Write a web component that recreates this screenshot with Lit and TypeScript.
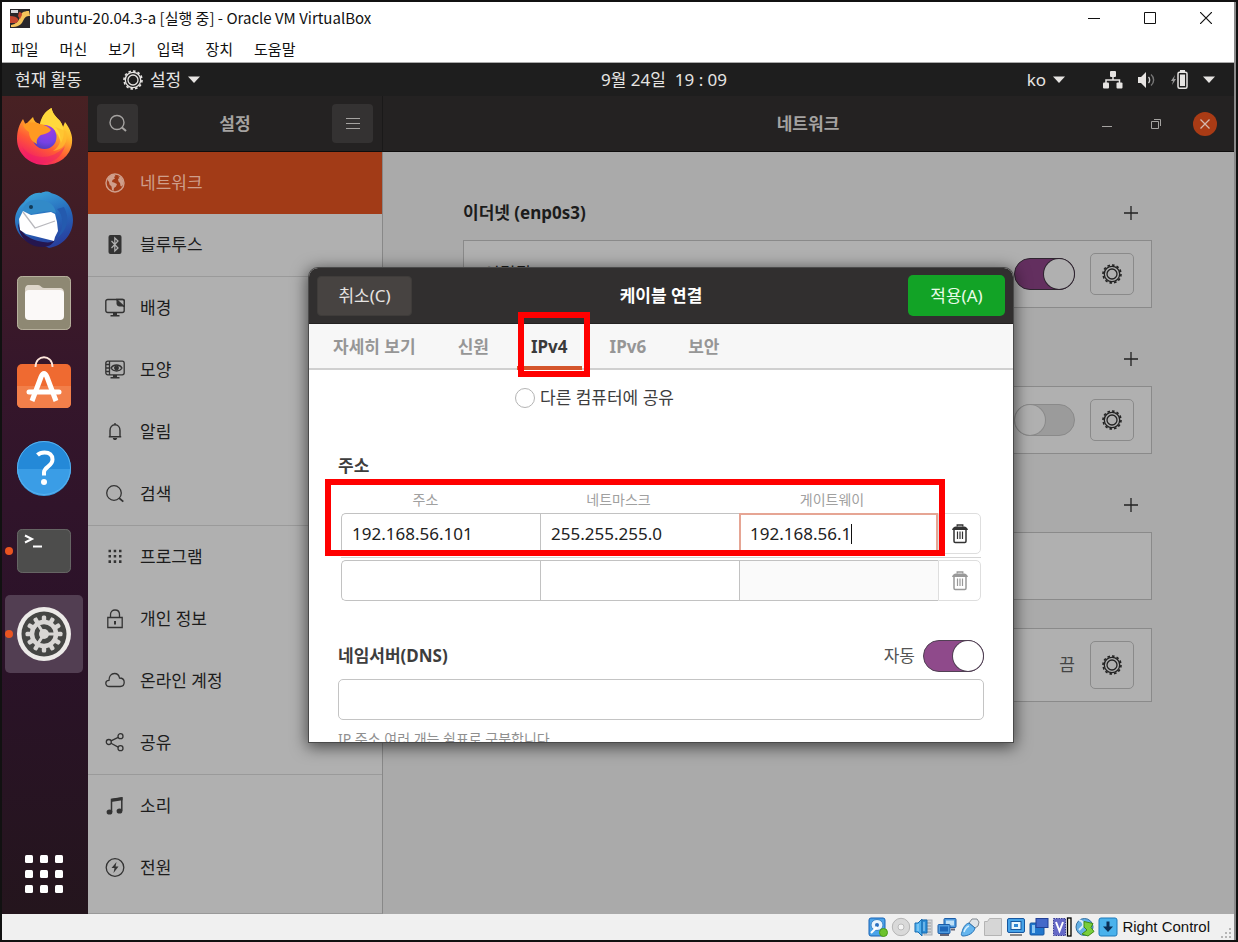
import { LitElement, html, css, svg, nothing } from "lit";
import { customElement } from "lit/decorators.js";
import { classMap } from "lit/directives/class-map.js";

const gear = html`<svg width="20" height="20" viewBox="0 0 20 20" fill="none" stroke="currentColor" aria-hidden="true">
  <circle cx="10" cy="10" r="9" stroke-width="1.6" pathLength="24" stroke-dasharray="1.1 .9" />
  <circle cx="10" cy="10" r="7.7" stroke-width="1.3" />
  <circle cx="10" cy="10" r="5" stroke-width="1.3" />
</svg>`;

const search = html`<svg width="20" height="20" viewBox="0 0 20 20" fill="none" stroke="currentColor" stroke-width="1.4" aria-hidden="true">
  <circle cx="9" cy="8.500" r="7" /><path d="M14 13.500l4 3.600" stroke-width="2" />
</svg>`;

const caret = html`<svg width="12" height="7" viewBox="0 0 12 7" fill="currentColor" aria-hidden="true"><path d="M0 .5h12L6 7z" /></svg>`;

const plus = html`<svg width="14" height="14" viewBox="0 0 14 14" stroke="currentColor" stroke-width="1.3" aria-hidden="true"><path d="M7 0v14M0 7h14" /></svg>`;

const trash = html`<svg width="16" height="20" viewBox="0 0 16 20" fill="none" stroke="currentColor" aria-hidden="true">
  <path d="M0 6C.6 3.800 2 2.800 4 2.600h8c2 .2 3.400 1.200 4 3.400z" fill="currentColor" stroke="none" />
  <path d="M5.200 2.600V1h5.600v1.600" stroke-width="1.300" />
  <path d="M2 6v11.300c0 .8.4 1.200 1.200 1.200h9.600c.8 0 1.200-.4 1.200-1.200V6" stroke-width="1.500" />
  <path d="M5.500 7.500v7.500M8 7.500v7.500M10.500 7.500v7.500" stroke-width="1.200" />
</svg>`;

/* 20px line icons of the settings list */
const panelIcons: Record<string, unknown> = {
  network: svg`<circle cx="10" cy="10" r="9" fill="none" stroke="currentColor" stroke-width="1.4"/>
    <path d="M3 5c2-2.500 4-3.500 6.500-3.500l1 1.500-1.500 1 1 1.500-2.500 1.500-.5 2 2 .5 3 1.500-1 2.500-2 1.500-.5 3-1.500-1-.5-3.500-2-2-.5-2.500L2.500 7zM13 3.500l3 .5 2 3 .5 3.500-1.500 3-1.500-.5-.5-3-1.500-1.500-.5-2.500 1.500-1z" fill="currentColor"/>`,
  bluetooth: svg`<rect x="3.500" y="0" width="13" height="19" rx="2" fill="currentColor"/>
    <path d="M6.500 6l6.500 7-3.200 3V3L13 6l-6.500 7" fill="none" stroke="#b0b0b0" stroke-width="1.200"/>`,
  background: svg`<g fill="none" stroke="currentColor" stroke-width="1.400"><rect x=".8" y="1.500" width="18.400" height="13" rx="2"/></g>
    <path d="M11.500 2v3.500c0 2 1.500 3 3 3H19z" fill="currentColor"/><path d="M13 2.500h5c.7 0 1 .3 1 1V8z" fill="#b0b0b0"/><path d="M12 2l7 6.500" stroke="currentColor" stroke-width="1.200"/><path d="M8 14.500h4v2.500h2.500v1.600h-9V17H8z" fill="currentColor"/><path d="M11 1.500h7.200c.7 0 1 .3 1 1V9" fill="none" stroke="currentColor" stroke-width="1.400"/>`,
  look: svg`<g fill="none" stroke="currentColor" stroke-width="1.300"><rect x=".8" y="1.200" width="18.400" height="13.600" rx="2"/><path d="M4.500 1v14M1 4.500h3.500M1 8h3.500M1 11.500h3.500M6 8c2.500-4 8.500-4 11 0-2.500 4-8.500 4-11 0z"/><circle cx="11.500" cy="8" r="1.800" fill="currentColor"/></g><path d="M8 15h4v2h2.500v1.600h-9V17H8z" fill="currentColor"/>`,
  bell: svg`<path d="M5 14.500V8.500C5 5.200 7 2.800 10 2.800s5 2.400 5 5.700v6M3.800 14.700h12.400M10 1v2" fill="none" stroke="currentColor" stroke-width="1.400"/><path d="M7.800 16h4.400c-.3 1.500-1 2-2.200 2s-2-.5-2.200-2z" fill="currentColor"/>`,
  search: svg`<circle cx="9" cy="9" r="7.300" fill="none" stroke="currentColor" stroke-width="1.300"/><path d="M14 14l4.300 3.700" stroke="currentColor" stroke-width="1.700"/>`,
  apps: svg`<path d="M3.500 4h2.500M8.700 4h2.500M14 4h2.500M3.500 9.300h2.500M8.700 9.300h2.500M14 9.300h2.500M3.500 14.600h2.500M8.700 14.600h2.500M14 14.600h2.500" stroke="currentColor" stroke-width="2.600" />`,
  lock: svg`<path d="M2.800 8.500h14.400v10H2.800zM5.500 8V5.500C5.500 2.500 7.500 1 10 1s4.500 1.500 4.500 4.500V8" fill="none" stroke="currentColor" stroke-width="1.300"/><path d="M9 12h2v3.500H9z" fill="currentColor"/>`,
  cloud: svg`<path d="M4.500 15.500C2.200 15.500.8 14.300.8 12.300c0-2 1.500-3 3.200-3C4 5.500 6.200 2.500 9.500 2.500c2.800 0 4.500 1.700 5 4.500 2.800 0 4.700 1.800 4.700 4.300 0 2.500-1.700 4.200-4 4.200z" fill="none" stroke="currentColor" stroke-width="1.300"/>`,
  share: svg`<g fill="none" stroke="currentColor" stroke-width="1.300"><circle cx="3.800" cy="9" r="2.500"/><circle cx="15.500" cy="3.200" r="2.500"/><circle cx="15.500" cy="15.200" r="2.500"/><path d="M6 7.900l7.200-3.600M6 10.200l7.200 3.900"/></g>`,
  music: svg`<path d="M6.500 16V3.500L16.800 1.800v13" fill="none" stroke="currentColor" stroke-width="1.500"/><path d="M6 3l11.500-1.800v3L6 6z" fill="currentColor"/><ellipse cx="4.500" cy="16" rx="2.900" ry="2.600" fill="currentColor"/><ellipse cx="14.500" cy="15" rx="2.900" ry="2.600" fill="currentColor"/>`,
  power: svg`<circle cx="10" cy="9.500" r="8.800" fill="none" stroke="currentColor" stroke-width="1.300"/><path d="M11.500 4l-5 6h3l-1 5 5-6.500h-3z" fill="currentColor"/>`,
};

const panels = [
  [{ icon: "network", label: "네트워크", on: true }, { icon: "bluetooth", label: "블루투스" }],
  [
    { icon: "background", label: "배경" },
    { icon: "look", label: "모양" },
    { icon: "bell", label: "알림" },
    { icon: "search", label: "검색" },
  ],
  [
    { icon: "apps", label: "프로그램" },
    { icon: "lock", label: "개인 정보" },
    { icon: "cloud", label: "온라인 계정" },
    { icon: "share", label: "공유" },
  ],
  [{ icon: "music", label: "소리" }, { icon: "power", label: "전원" }],
] as { icon: string; label: string; on?: boolean }[][];

/* Launchers, drawn on a 60px canvas */
const teeth = Array.from({ length: 12 }, (_, i) => svg`<rect x="27.800" y="11.500" width="4.400" height="7" rx="1.500" transform=${`rotate(${i * 30} 30 30)`} />`);
const launchers: { name: string; art: unknown; running?: boolean; active?: boolean }[] = [
  {
    name: "Firefox",
    art: svg`<defs>
      <linearGradient id="fx" x1=".8" y1=".05" x2=".3" y2="1"><stop offset="0" stop-color="#fff04a"/><stop offset=".35" stop-color="#ffb52a"/><stop offset=".65" stop-color="#ff5a35"/><stop offset="1" stop-color="#f0136e"/></linearGradient>
      <radialGradient id="fxp" cx=".6" cy=".2" r=".9"><stop offset="0" stop-color="#a43ae0"/><stop offset=".6" stop-color="#7542e5"/><stop offset="1" stop-color="#4a3ab0"/></radialGradient></defs>
      <path d="M3 33c0-8 2-14 6-20l2.500 5.500L19 11c1 4 3 6 7 7.500C28 10 32 5 37.500 2c1 6 5 9 8.500 13 1.500 2 2.500 4 3 6l2-5c5 7 8 13 7 21-1.500 13-13 22-27.500 22S3 48 3 33z" fill="url(#fx)"/>
      <path d="M26 18c2-9 6-13 11.500-16 1 6 5 9 8.500 13 5 8 5 15 1 22-3-12-9-18-21-19z" fill="#ffd93c"/>
      <circle cx="30.500" cy="31" r="12" fill="url(#fxp)"/>
      <path d="M9 19c4-3 12-3 17-1 5 1 9 3 11 6-2 3-6 4-10 5-3 2-5 5-4 9-5-2-8-7-8-12-3-2-5-4-6-7z" fill="#ff9a22"/>
      <path d="M41 21c7 6 8 18-2 24 10-1 16-9 13-20z" fill="#ffbe2e" opacity=".7"/>
      <path d="M8 41c9 12 29 15 43-1-4 12-12 17-22 17-9 0-17-6-21-16z" fill="#ec1b6c" opacity=".45"/>`,
  },
  {
    name: "Thunderbird",
    art: svg`<defs><linearGradient id="tb" x1=".3" y1="0" x2=".7" y2="1"><stop offset="0" stop-color="#3ba6dc"/><stop offset=".5" stop-color="#2668ba"/><stop offset="1" stop-color="#283b9c"/></linearGradient></defs>
      <path d="M10 13C15 6 22 3 27 4c4-2 8-2 10 0 13 3 22 14 22 27 0 15-11 26-24 28l-8-4C12 56 1 45 1 31 1 25 4 18 10 13z" fill="url(#tb)"/>
      <path d="M4 34c3 10 9 15 20 18 8 2 14 2 17-1-3 5-7 7-13 7C14 58 4 47 4 34z" fill="#25164f"/>
      <path d="M9 22l8 4 20-3 4 2 2 8 1 9-3 6-1 4-28-7-6-4-1-11z" fill="#fff"/>
      <path d="M9 23l12 16 20-7" fill="none" stroke="#b8b8bd" stroke-width="1.300"/>
      <path d="M9 21c1-8 9-11 18-10 9 1 14 6 15 13-9-4-16 0-25 1z" fill="#328ac8"/>
      <path d="M43 20c7 7 7 19 0 29 11-8 13-20 7-31z" fill="#245aae"/>
      <circle cx="17" cy="18" r="2" fill="#123a57"/>`,
  },
  {
    name: "파일 관리자",
    art: svg`<rect x="3" y="4" width="54" height="54" rx="5" fill="#8e8873"/><rect x="3.500" y="4.500" width="53" height="53" rx="5" fill="none" stroke="#b6af9c"/>
      <path d="M11 18c0-3 1-5 4-5h9c3 0 3 3 6 3h15c4 0 5 2 5 5v8H11z" fill="#ddd5ca"/><rect x="11" y="18" width="39" height="30" rx="4" fill="#fbf9f8"/>`,
  },
  {
    name: "우분투 소프트웨어",
    art: svg`<rect x="3" y="9" width="54" height="44" rx="5" fill="#ef6a31"/>
      <path d="M3 31h54v17c0 3-2 5-5 5H8c-3 0-5-2-5-5z" fill="#f27f4a"/>
      <path d="M21.500 12c0-13 17-13 17 0" fill="none" stroke="#ffe7dc" stroke-width="1.800"/>
      <path d="M18 46l9-24q3-7 6 0l9 24" fill="none" stroke="#fff" stroke-width="5"/><path d="M15 37h30" stroke="#fff" stroke-width="5" stroke-linecap="round"/>`,
  },
  {
    name: "도움말",
    art: svg`<circle cx="30" cy="30" r="27" fill="#2489d8"/><path d="M3 31a27 27 0 0 0 54 0z" fill="#3a9de6"/><circle cx="30" cy="30" r="26.500" fill="none" stroke="#59b2ee"/>
      <path d="M23.500 17c2-2 4-2.500 7-2.500 5 0 8 2.500 8 7 0 7-8.500 7-8.500 13v3" fill="none" stroke="#fff" stroke-width="4"/><circle cx="30" cy="44" r="3" fill="#fff"/>`,
  },
  {
    name: "터미널",
    running: true,
    art: svg`<rect x="3" y="8" width="54" height="44" rx="5" fill="#4d4d4c"/><rect x="3.500" y="8.500" width="53" height="43" rx="5" fill="none" stroke="#666564"/>
      <path d="M11 14.500l7 3.500-7 3.500" fill="none" stroke="#fff" stroke-width="2"/><path d="M19 25.500h9" stroke="#fff" stroke-width="2"/>`,
  },
  {
    name: "설정",
    running: true,
    active: true,
    art: svg`<circle cx="30" cy="30" r="27" fill="#eceae8"/><circle cx="30" cy="30" r="22.500" fill="#454644"/>
      <g fill="#d8d6d4">${teeth}</g><circle cx="30" cy="30" r="12" fill="none" stroke="#d8d6d4" stroke-width="4.500"/>
      <circle cx="30" cy="30" r="5" fill="#d8d6d4"/><path d="M30 30h11M30 30l-6-9.500M30 30l-6 9.500" stroke="#d8d6d4" stroke-width="3"/>`,
  },
];

/* 20px indicators of the virtual machine's status bar */
const indicators: { name: string; art: unknown }[] = [
  { name: "하드 디스크", art: svg`<rect x="1" y="1" width="16" height="18" rx="2" fill="#4aa3ea" stroke="#1863b4"/><ellipse cx="9" cy="8" rx="6" ry="5.500" fill="#e9f4fd" stroke="#3a84c8"/><circle cx="9" cy="8" r="2" fill="#2a6fc0"/><path d="M3 16l6-6" stroke="#fff" stroke-width="2"/><circle cx="15.500" cy="15.500" r="4" fill="#6cc22c" stroke="#4b9a18"/>` },
  { name: "광학 드라이브", art: svg`<circle cx="10" cy="10" r="8.700" fill="#d9d9d9" stroke="#b5b5b5"/><circle cx="10" cy="10" r="3" fill="#f4f4f4" stroke="#bbb"/>` },
  { name: "오디오", art: svg`<rect x="10" y="3" width="8" height="15" fill="#d3d6da" stroke="#a9aeb4"/><path d="M13 6h4M13 9h4M13 12h4M13 15h4" stroke="#999"/><path d="M1 6h3l4-4v17l-4-4H1z" fill="#4fb0ee" stroke="#176bb0"/><path d="M8 3h5v13H8z" fill="#2e8fd8" stroke="#176bb0"/><path d="M4 7v7M10 5v9" stroke="#a7daf8"/>` },
  { name: "네트워크", art: svg`<rect x="7" y="1.500" width="12" height="9" rx="1" fill="#4f9bdf" stroke="#1c5ca6"/><rect x="9" y="3.500" width="8" height="5" fill="#bfe0f7"/><rect x="1" y="7.500" width="12" height="9" rx="1" fill="#4f9bdf" stroke="#1c5ca6"/><rect x="3" y="9.500" width="8" height="5" fill="#1d66b8"/><path d="M3 18h9M14 12.500h4" stroke="#667" stroke-width="2"/>` },
  { name: "USB", art: svg`<path d="M12 2l5 0 2 3-1 4-3 2-6-5z" fill="#dfe4e8" stroke="#81888f"/><path d="M9 6l6 5c-1 5-7 8-12 8-2 0-2-2-1-4 1-4 3-8 7-9z" fill="#64b5ee" stroke="#2571b5"/><path d="M4 15c1-3 2-5 5-6" stroke="#d5efff" stroke-width="1.500" fill="none"/>` },
  { name: "공유 폴더", art: svg`<path d="M1.500 4.500h3l2-3h12v17h-17z" fill="#d6d6d6" stroke="#b4b4b4"/>` },
  { name: "디스플레이", art: svg`<rect x="1.500" y="1.500" width="17" height="14" rx="1.500" fill="#45a2e8" stroke="#17579f"/><rect x="5" y="4.500" width="10" height="8" fill="#e6f4fd" stroke="#17579f"/><rect x="8" y="7" width="4" height="3" fill="#2f86d4"/><path d="M4 18h12" stroke="#888" stroke-width="2"/>` },
  { name: "녹화", art: svg`<rect x="1" y="6" width="14" height="12" rx="1" fill="#2177cd" stroke="#17579f"/><rect x="7" y="1.500" width="12" height="9" fill="#4569c9" stroke="#203f96"/><path d="M3 8h3v8H3z" fill="#8bc7f3"/>` },
  { name: "가상화", art: svg`<rect x="1.500" y="1.500" width="12" height="17" fill="#6468c6" stroke="#3b3f94" stroke-dasharray="1.500 1"/><path d="M4 5l3.500 9L11 5" fill="none" stroke="#fff" stroke-width="2"/><rect x="15.500" y="1" width="3.500" height="18" fill="#f2f0d8" stroke="#000" stroke-width="1.300"/>` },
  { name: "마우스 통합", art: svg`<circle cx="9.500" cy="10" r="8.500" fill="#62b0e6" stroke="#336f9f"/><path d="M4 3c3 1 5 3 4 6l-4 4" stroke="#dceefa" stroke-width="2" fill="none"/><path d="M9 4.500l9 2-2 4 3 4-6 4.500-6-2 5-4-3-3z" fill="#78ce3c" stroke="#3f8b16"/>` },
  { name: "키보드 캡처", art: svg`<rect x="1" y="1" width="18" height="18" rx="2" fill="#4ab2ec" stroke="#1d79b8"/><path d="M10 4.500v6" stroke="#0c2f55" stroke-width="3"/><path d="M5 9.500h10L10 15z" fill="#0c2f55"/>` },
];

const base = css`
  *, *::before, *::after { box-sizing: border-box; }
  :host { font-family: "Noto Sans", "Noto Sans CJK KR", sans-serif; font-size: 17px; line-height: 24px; }
  button, input { font: inherit; color: inherit; margin: 0; }
  button { display: grid; place-items: center; padding: 0; border: 0; background: none; }
  svg { display: block; flex: none; }
  .switch {
    appearance: none; flex: none; width: 61px; height: 32px; border-radius: 16px;
    border: 1px solid #8a8a8a; background: #9b9b9b; display: flex; align-items: center;
  }
  .switch::before { content: ""; width: 30px; height: 30px; border-radius: 50%; background: #b0b0b0; box-shadow: 0 0 0 1px #8a8a8a; }
  .switch:checked { background: #632f5f; border-color: #2f2530; justify-content: flex-end; }
  .switch:checked::before { box-shadow: 0 0 0 1px #2f2530; }
`;

@customElement("app-dock")
class AppDock extends LitElement {
  static styles = [base, css`
    :host { width: 86px; flex: none; display: flex; flex-direction: column; justify-content: space-between;
      background: linear-gradient(#482123, #35162b 35%, #2b1229 65%, #24151d); }
    .apps { display: grid; gap: 5px; padding: 1px 5px 0 3px; }
    .app { position: relative; width: 78px; height: 78px; border-radius: 5px; }
    .active { background: #523e52; }
    .running::before { content: ""; position: absolute; left: 0; top: 35px; width: 8px; height: 8px; border-radius: 50%; background: #e95420; }
    .all { width: 84px; height: 80px; color: #fff; }
  `];
  render() {
    return html`<nav class="apps" aria-label="Dock">
        ${launchers.map((l) => html`<button class=${classMap({ app: true, running: !!l.running, active: !!l.active })} aria-label=${l.name}>
          <svg width="60" height="60" viewBox="0 0 60 60" aria-hidden="true">${l.art}</svg>
        </button>`)}
      </nav>
      <button class="all" aria-label="프로그램 표시">
        <svg width="38" height="38" viewBox="0 0 38 38" fill="currentColor" aria-hidden="true">
          ${[0, 15, 30].map((y) => [0, 15, 30].map((x) => svg`<rect x=${x} y=${y} width="8" height="8" rx="1.500" />`))}
        </svg>
      </button>`;
  }
}

@customElement("connection-dialog")
class ConnectionDialog extends LitElement {
  static styles = [base, css`
    :host { display: flex; flex-direction: column; width: min(704px, 100%); height: 474px; border-radius: 9px 9px 0 0;
      background: #fff; color: #3d3d3d; overflow: hidden; box-shadow: 0 0 0 1px #4a4a4a, 0 3px 16px 2px rgba(0, 0, 0, .6); }
    header { flex: none; height: 56px; display: grid; grid-template-columns: 1fr auto 1fr; align-items: center; padding: 0 8px;
      background: #312f2f; border-bottom: 1px solid #242222; color: #fff; }
    h2 { margin: 0; font-size: 17px; line-height: 24px; }
    .cancel { width: 95px; height: 40px; border-radius: 4px; background: #474341; color: #e6e4e2; border: 1px solid #3f3c3a; }
    .apply { justify-self: end; width: 97px; height: 41px; border-radius: 5px; background: #12a326; color: #e9fbe9; }
    .tabs { flex: none; height: 46px; display: flex; gap: 14px; padding: 0 10px; background: #f7f7f7; border-bottom: 2px solid #d0d0d0; }
    .tab { position: relative; height: 46px; padding: 4px 14px 0; color: #969696; font-weight: 700; border-bottom: 4px solid transparent; }
    .current { color: #3a3a3a; border-bottom-color: #d4552c; }
    .mark { position: absolute; border: 6px solid #f00; pointer-events: none; }
    .current .mark { inset: -12px -8px -11px 1px; }
    .body { flex: 1; min-height: 0; overflow: hidden; padding: 15px 29px 0; }
    .share { display: flex; align-items: center; gap: 5px; height: 26px; margin-left: 177px; }
    .share input { appearance: none; width: 20px; height: 20px; border: 1px solid #b4b4b4; border-radius: 50%; background: #fff; }
    h3 { margin: 0; font-size: 17px; line-height: 24px; }
    .addresses-title { margin-top: 43px; }
    .addresses { position: relative; margin: 0 3px; }
    .addresses .mark { inset: 1px 36px 45px -16px; }
    .row { display: grid; grid-template-columns: 199px 199px 1fr 43px; }
    .heads { font-size: 14px; line-height: 20px; padding: 12px 0 3px; color: #a0a0a0; text-align: center; }
    .heads span { padding-right: 30px; }
    .heads span:nth-child(2) { padding-right: 42px; }
    .heads span:nth-child(3) { padding-right: 13px; }
    .line { height: 6px; }
    .line::before { content: ""; display: block; height: 4px; border-bottom: 1px solid #d5d5d5; }
    .row input { min-width: 0; width: 100%; height: 41px; padding: 0 10px; border: 1px solid #c2c2c2; border-right-width: 0; background: #fff; color: #222; outline: 0; }
    .row .first { border-radius: 5px 0 0 5px; }
    .row input:disabled { background: #fafafa; }
    .row .editing { border: 2px solid #e6a594; padding-left: 9px; }
    .cell { position: relative; display: flex; }
    .cursor { position: absolute; left: 112px; top: 11px; width: 1px; height: 20px; background: #111; }
    .trash { height: 41px; border: 1px solid #dedede; border-radius: 0 5px 5px 0; color: #333; }
    .trash:disabled { color: #999; }
    .dns { display: flex; align-items: center; gap: 8px; margin: 39px 0 7px; }
    .dns h3 { flex: 1; }
    .dns label { display: flex; align-items: center; gap: 8px; color: #555; }
    .switch:checked { background: #8f4a8b; border-color: #514054; }
    .switch:checked::before { background: #fff; box-shadow: 0 0 0 1px #514054; }
    .server { display: block; width: 100%; height: 41px; border: 1px solid #c4c4c4; border-radius: 5px; background: #fff; padding: 0 11px; }
    .hint { margin: 9px 0 0; font-size: 14px; line-height: 20px; color: #8f8f8f; }
  `];
  render() {
    const tab = (label: string, on = false) => html`<button class=${classMap({ tab: true, current: on })} role="tab" aria-selected=${on ? "true" : "false"}>${label}${on ? html`<span class="mark"></span>` : nothing}</button>`;
    return html`<header><button class="cancel">취소(C)</button><h2>케이블 연결</h2><button class="apply">적용(A)</button></header>
      <div class="tabs" role="tablist">${tab("자세히 보기")}${tab("신원")}${tab("IPv4", true)}${tab("IPv6")}${tab("보안")}</div>
      <div class="body">
        <label class="share"><input type="radio" name="method" />다른 컴퓨터에 공유</label>
        <h3 class="addresses-title">주소</h3>
        <div class="addresses">
          <div class="row heads"><span>주소</span><span>네트마스크</span><span>게이트웨이</span></div>
          <div class="row">
            <input class="first" aria-label="주소" value="192.168.56.101" />
            <input aria-label="네트마스크" value="255.255.255.0" />
            <div class="cell"><input class="editing" aria-label="게이트웨이" value="192.168.56.1" /><span class="cursor"></span></div>
            <button class="trash" aria-label="삭제">${trash}</button>
          </div>
          <div class="line"></div>
          <div class="row">
            <input class="first" aria-label="주소" />
            <input aria-label="네트마스크" />
            <input aria-label="게이트웨이" disabled />
            <button class="trash" aria-label="삭제" disabled>${trash}</button>
          </div>
          <span class="mark"></span>
        </div>
        <div class="dns"><h3>네임서버(DNS)</h3><label>자동<input class="switch" type="checkbox" role="switch" checked /></label></div>
        <input class="server" aria-label="네임서버(DNS)" />
        <p class="hint">IP 주소 여러 개는 쉼표로 구분합니다.</p>
      </div>`;
  }
}

@customElement("settings-window")
class SettingsWindow extends LitElement {
  static styles = [base, css`
    :host { flex: 1; min-width: 0; position: relative; display: grid; grid-template-columns: 295px 1fr; grid-template-rows: 56px 1fr; background: #aaa; color: #1c1c1c; }
    .bar { display: grid; grid-template-columns: 1fr auto 1fr; align-items: center; background: #242222; color: #a5a3a1; border-bottom: 1px solid #0e0d0d; padding: 0 9px; }
    .side-bar { border-right: 1px solid #1a1919; }
    .main-bar { padding: 0 17px 0 16px; }
    h1, h2 { margin: 0; font-size: 17px; line-height: 24px; }
    .tool { width: 41px; height: 39px; border-radius: 4px; background: #343232; }
    .end { justify-self: end; }
    .controls { justify-self: end; display: flex; gap: 25px; }
    .controls button { width: 24px; height: 24px; border-radius: 50%; }
    .controls .close { background: #a93b15; color: #d5b9ae; }
    .list { background: #b0b0b0; border-right: 1px solid #888; border-bottom: 1px solid #999; }
    .group { border-bottom: 1px solid #9a9a9a; }
    .group:last-child { border: 0; }
    .item { display: flex; align-items: center; gap: 15px; height: 62px; padding: 0 17px; color: #1c1c1c; text-decoration: none; }
    .item svg { color: #333; }
    .on, .on svg { color: #cf9e8b; }
    .on { background: #a23b17; }
    .content { padding: 45px 26px 0 24px; }
    .inner { max-width: 689px; margin: 0 auto; }
    .title { display: flex; align-items: center; justify-content: flex-end; height: 32px; margin-bottom: 11px; }
    .title h2 { flex: 1; }
    .title button { width: 42px; height: 32px; color: #222; }
    .card { display: flex; align-items: center; gap: 15px; height: 68px; margin-bottom: 35px; padding: 0 17px 0 20px; background: #b0b0b0; border: 1px solid #8a8a8a; }
    .short { margin-bottom: 28px; }
    .tall { height: 74px; }
    .grow { flex: 1; }
    .gear { width: 44px; height: 42px; border: 1px solid #8a8a8a; border-radius: 5px; color: #222; }
    .tall .gear { height: 48px; }
    .off { color: #444; }
    .layer { position: absolute; inset: 0; display: grid; place-items: center; }
  `];
  render() {
    return html`<div class="bar side-bar">
        <button class="tool" aria-label="검색">${search}</button><h1>설정</h1>
        <button class="tool end" aria-label="메뉴"><svg width="14" height="14" viewBox="0 0 14 14" stroke="currentColor" aria-hidden="true"><path d="M0 1.500h14M0 6.500h14M0 11.500h14" /></svg></button>
      </div>
      <div class="bar main-bar"><span></span><h1>네트워크</h1>
        <div class="controls">
          <button aria-label="최소화"><svg width="10" height="10" viewBox="0 0 10 10" stroke="currentColor"><path d="M0 7.500h10" /></svg></button>
          <button aria-label="복원"><svg width="10" height="10" viewBox="0 0 10 10" fill="none" stroke="currentColor"><path d="M.5 2.500h7v7h-7zM3 .5h6.500V7" /></svg></button>
          <button class="close" aria-label="닫기"><svg width="10" height="10" viewBox="0 0 10 10" stroke="currentColor" stroke-width="1.300"><path d="M.5.5l9 9M9.500.5l-9 9" /></svg></button>
        </div>
      </div>
      <nav class="list">
        ${panels.map((g) => html`<div class="group">${g.map((p) => html`<a href="#" class=${classMap({ item: true, on: !!p.on })}>
          <svg width="20" height="20" viewBox="0 0 20 20" aria-hidden="true">${panelIcons[p.icon]}</svg>${p.label}</a>`)}</div>`)}
      </nav>
      <main class="content"><div class="inner">
        <div class="title"><h2>이더넷 (enp0s3)</h2><button aria-label="추가">${plus}</button></div>
        <div class="card"><span class="grow">연결됨 - 1000Mb/s</span><input class="switch" type="checkbox" role="switch" aria-label="연결" checked /><button class="gear" aria-label="설정">${gear}</button></div>
        <div class="title"><button aria-label="추가">${plus}</button></div>
        <div class="card"><span class="grow"></span><input class="switch" type="checkbox" role="switch" aria-label="연결" /><button class="gear" aria-label="설정">${gear}</button></div>
        <div class="title"><button aria-label="추가">${plus}</button></div>
        <div class="card short"></div>
        <div class="card tall"><span class="grow"></span><span class="off">끔</span><button class="gear" aria-label="설정">${gear}</button></div>
      </div></main>
      <div class="layer"><connection-dialog role="dialog" aria-label="케이블 연결"></connection-dialog></div>`;
  }
}

@customElement("app-root")
class AppRoot extends LitElement {
  static styles = [base, css`
    :host { display: flex; flex-direction: column; min-height: 100vh; box-sizing: border-box; border: 2px solid #111; background: #aaa; }
    .frame { flex: 1; display: flex; flex-direction: column; border-right: 2px solid #8a8a8a; }
    .caption { display: flex; align-items: center; height: 32px; padding-left: 8px; gap: 6px; background: #fff; color: #111;
      font-family: "Noto Sans CJK KR", sans-serif; font-size: 15px; line-height: 22px; }
    .caption .name { flex: 1; }
    .window-buttons { display: flex; }
    .window-buttons button { width: 56px; height: 32px; }
    .menu { display: flex; align-items: center; gap: 21px; height: 29px; padding: 1px 9px 0; background: #fff; border-bottom: 1px solid #aaa;
      font-size: 15px; line-height: 22px; }
    .menu a { color: #111; text-decoration: none; }
    .panel { display: grid; grid-template-columns: 13fr auto 11fr; align-items: center; height: 33px; background: #1e1e1e; color: #e6e4e2; }
    .panel button { display: flex; align-items: center; gap: 7px; }
    .left { display: flex; gap: 41px; padding-left: 13px; }
    .right { display: flex; justify-content: flex-end; gap: 38px; padding-right: 19px; }
    .right .tray { gap: 15px; }
    .clock { white-space: pre; }
    .desktop { flex: 1; display: flex; }
    .status { display: flex; align-items: center; justify-content: flex-end; gap: 3px; height: 26px; padding: 0 1px; background: #f0f0f0; color: #111;
      font-family: "Liberation Sans", sans-serif; font-size: 15px; line-height: 20px; }
    .status .host-key { margin: 0 8px 0 1px; }
    .grip { align-self: flex-end; }
  `];
  render() {
    return html`<div class="frame">
      <div class="caption">
        <svg width="20" height="19" viewBox="0 0 20 19" aria-hidden="true"><rect width="20" height="19" fill="#29262b" /><path d="M19 2c-6 0-8 2-9 6s-4 7-9 8v2c7 0 10-2 12-6s3-5 7-5z" fill="#f3c25a" /><path d="M0 7c4 0 7 1 8 3s-1 4-3 4H0z" fill="#c2452f" /><path d="M9 3c2 0 3 1 3 3l-2 4-2-3z" fill="#c2452f" /><path d="M1 1h7v3H1z" fill="#d8d8dc" /></svg>
        <span class="name">ubuntu-20.04.3-a [실행 중] - Oracle VM VirtualBox</span>
        <div class="window-buttons">
          <button aria-label="최소화"><svg width="12" height="12" viewBox="0 0 12 12" stroke="#111"><path d="M0 6.500h12" /></svg></button>
          <button aria-label="최대화"><svg width="12" height="12" viewBox="0 0 12 12" fill="none" stroke="#111"><path d="M.5.5h11v11H.5z" /></svg></button>
          <button aria-label="닫기"><svg width="12" height="12" viewBox="0 0 12 12" stroke="#111" stroke-width="1.200"><path d="M0 0l12 12M12 0L0 12" /></svg></button>
        </div>
      </div>
      <nav class="menu">${["파일", "머신", "보기", "입력", "장치", "도움말"].map((m) => html`<a href="#">${m}</a>`)}</nav>
      <div class="panel">
        <div class="left"><button>현재 활동</button><button>${gear}설정${caret}</button></div>
        <button class="clock">9월 24일  19 : 09</button>
        <div class="right">
          <button>ko ${caret}</button>
          <button class="tray" aria-label="시스템 메뉴">
            <svg width="20" height="18" viewBox="0 0 20 18" fill="currentColor"><rect x="7" y="0" width="6" height="6" rx="1" /><rect x="0" y="11.500" width="6" height="6" rx="1" /><rect x="13.500" y="11.500" width="6" height="6" rx="1" /><path d="M10 5v4M3 12V9h13.500v3" fill="none" stroke="currentColor" stroke-width="1.500" /></svg>
            <svg width="18" height="16" viewBox="0 0 18 16" fill="currentColor"><path d="M0 5h3l5-5v16l-5-5H0z" /><path d="M10.500 5c1.500 1.500 1.500 4.500 0 6" fill="none" stroke="#ccc" stroke-width="1.400" /><path d="M13 2.500c3.500 3 3.500 8 0 11" fill="none" stroke="#777" stroke-width="1.400" /></svg>
            <svg width="17" height="20" viewBox="0 0 17 20" fill="currentColor"><path d="M4 5L0 11h2l-1 4 4-6H3z" fill="#999" /><path d="M9 0h5v2H9z" /><rect x="7" y="2.200" width="9" height="16" rx="1.500" fill="none" stroke="currentColor" stroke-width="1.500" /><path d="M9 4.500h5v11.500H9z" /></svg>
            ${caret}
          </button>
        </div>
      </div>
      <div class="desktop"><app-dock></app-dock><settings-window></settings-window></div>
      <footer class="status">
        ${indicators.map((i) => html`<svg width="20" height="20" viewBox="0 0 20 20" role="img" aria-label=${i.name}>${i.art}</svg>`)}
        <span class="host-key">Right Control</span>
        <svg class="grip" width="12" height="12" viewBox="0 0 12 12" fill="#b5b5b5" aria-hidden="true"><path d="M8 0h2v2H8zM4 4h2v2H4zM8 4h2v2H8zM0 8h2v2H0zM4 8h2v2H4zM8 8h2v2H8z" /></svg>
      </footer>
    </div>`;
  }
}
